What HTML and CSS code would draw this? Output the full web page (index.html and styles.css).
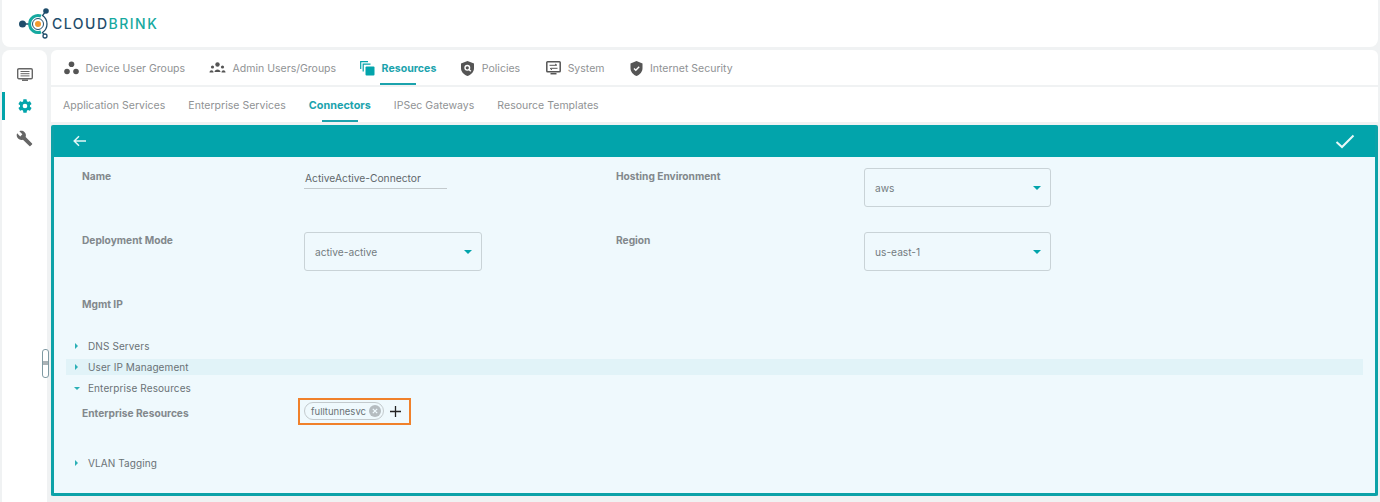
FILE: index.html
```html
<!DOCTYPE html>
<html lang="en">
<head>
    <meta charset="UTF-8">
    <meta name="viewport" content="width=device-width, initial-scale=1.0">
    <title>Cloudbrink</title>
    <link rel="stylesheet" href="styles.css">
</head>
<body>
    <header class="topbar">
        <svg class="logo-mark" width="35" height="38" viewBox="0 0 35 38">
            <path d="M5 19 H13" stroke="#1f4d6b" stroke-width="1.500"/>
            <circle cx="5.500" cy="19" r="3.500" fill="#1f4d6b"/>
            <path d="M24 11 A8.500 8.500 0 1 0 24 27" fill="none" stroke="#16a9a0" stroke-width="3"/>
            <path d="M29 6 L25.500 10.500 A10.300 10.300 0 0 1 25.500 27.500 L28 31" fill="none" stroke="#1f4d6b" stroke-width="1.300"/>
            <circle cx="21" cy="19" r="5.500" fill="#fff" stroke="#1f4d6b" stroke-width="1"/>
            <circle cx="21" cy="19" r="3" fill="#f29a2e"/>
            <circle cx="29" cy="6" r="2.800" fill="#1f4d6b"/>
            <circle cx="28" cy="31" r="2" fill="#fff" stroke="#1f4d6b" stroke-width="1.300"/>
        </svg>
        <span class="logo-text">CLOUD<span class="logo-accent">BRINK</span></span>
    </header>

    <div class="layout">
        <nav class="sidebar">
            <a class="side-item">
                <svg width="16" height="13" viewBox="0 0 16 13"><rect x=".7" y=".7" width="14.600" height="10" rx="1.200" fill="none" stroke="#666" stroke-width="1.400"/><path d="M3.500 3.500 H12.500 M3.500 5.700 H12.500 M3.500 7.900 H12.500" stroke="#666" stroke-width="1"/><path d="M5 12.200 H11" stroke="#666" stroke-width="1.500"/></svg>
            </a>
            <a class="side-item active">
                <svg width="16" height="16" viewBox="0 0 24 24"><path fill="#02a4ab" d="M19.400 13c.04-.33.06-.66.06-1s-.02-.67-.06-1l2.100-1.650c.2-.15.25-.42.12-.64l-2-3.460c-.12-.22-.39-.3-.61-.22l-2.490 1c-.52-.4-1.080-.73-1.690-.98l-.38-2.650A.49.49 0 0 0 14 2h-4c-.25 0-.46.18-.49.42l-.38 2.650c-.61.25-1.170.59-1.690.98l-2.490-1c-.23-.09-.49 0-.61.22l-2 3.460c-.13.22-.07.49.12.64L4.570 11c-.04.33-.07.67-.07 1s.03.67.07 1l-2.110 1.650c-.19.15-.24.42-.12.64l2 3.460c.12.22.39.3.61.22l2.490-1c.52.4 1.080.73 1.690.98l.38 2.650c.03.24.24.42.49.42h4c.25 0 .46-.18.49-.42l.38-2.650c.61-.25 1.170-.59 1.690-.98l2.490 1c.23.09.49 0 .61-.22l2-3.460c.12-.22.07-.49-.12-.64zM12 15.500a3.500 3.500 0 1 1 0-7 3.500 3.500 0 0 1 0 7z"/></svg>
            </a>
            <a class="side-item">
                <svg width="17" height="17" viewBox="0 0 24 24"><path fill="#666" d="M22.700 19l-9.100-9.100c.9-2.300.4-5-1.500-6.900-2-2-5-2.400-7.400-1.300L9 6 6 9 1.600 4.700C.4 7.100.9 10.100 2.900 12.100c1.900 1.900 4.600 2.400 6.900 1.500l9.100 9.100c.4.400 1 .4 1.400 0l2.300-2.300c.5-.4.5-1.100.1-1.400z"/></svg>
            </a>
        </nav>
        <div class="handle"></div>

        <main class="content">
            <div class="tabs main-tabs">
                <a class="tab">
                    <svg width="15" height="14" viewBox="0 0 15 14"><circle cx="7.500" cy="3.300" r="2.800" fill="#555"/><circle cx="3" cy="10.500" r="2.800" fill="#555"/><circle cx="12" cy="10.500" r="2.800" fill="#555"/></svg>
                    Device User Groups
                </a>
                <a class="tab">
                    <svg width="17" height="12" viewBox="0 0 17 12"><g fill="#555"><circle cx="8.500" cy="2.500" r="2.200"/><path d="M5.500 10 C5.500 6.500 11.500 6.500 11.500 10 Z"/><circle cx="3.500" cy="5" r="1.600"/><path d="M.5 10.500 C.5 7.500 4.500 7.500 4.500 10.500 Z"/><circle cx="13.500" cy="5" r="1.600"/><path d="M12.500 10.500 C12.500 7.500 16.500 7.500 16.500 10.500 Z"/></g></svg>
                    Admin Users/Groups
                </a>
                <a class="tab active">
                    <svg width="15" height="15" viewBox="0 0 15 15"><path d="M.7 8 V.7 H8 M3.200 10.500 V3.200 H10.500" fill="none" stroke="#02a4ab" stroke-width="1.200"/><rect x="5.500" y="5.500" width="9" height="9" rx="1" fill="#02a4ab"/></svg>
                    Resources
                </a>
                <a class="tab">
                    <svg width="15" height="15" viewBox="0 0 14 15"><path fill="#555" d="M7 0 L13.500 2.400 V7 C13.500 10.800 10.800 13.600 7 15 C3.200 13.600 .5 10.800 .5 7 V2.400 Z"/><circle cx="6.800" cy="6.800" r="2.300" fill="none" stroke="#fff" stroke-width="1.400"/><path d="M8.500 8.500 L10.300 10.300" stroke="#fff" stroke-width="1.400"/></svg>
                    Policies
                </a>
                <a class="tab tab-system">
                    <svg width="15" height="14" viewBox="0 0 15 14"><rect x=".8" y=".8" width="13.400" height="10" rx=".8" fill="none" stroke="#555" stroke-width="1.500"/><path d="M3.500 4.300 H10.500 M9 3 L11 4.300 M11.500 7.300 H4.500 M6 8.800 L4 7.300" stroke="#555" stroke-width="1" fill="none"/><path d="M4.500 12.700 H10.500" stroke="#555" stroke-width="1.500"/></svg>
                    System
                </a>
                <a class="tab">
                    <svg width="15" height="15" viewBox="0 0 14 15"><path fill="#555" d="M7 0 L13 2.400 V7 C13 10.800 10.500 13.600 7 15 C3.500 13.600 1 10.800 1 7 V2.400 Z"/><path d="M4.500 7.500 L6.300 9.300 L9.700 5.700" fill="none" stroke="#fff" stroke-width="1.400"/></svg>
                    Internet Security
                </a>
            </div>

            <div class="tabs sub-tabs">
                <a class="tab">Application Services</a>
                <a class="tab">Enterprise Services</a>
                <a class="tab active">Connectors</a>
                <a class="tab">IPSec Gateways</a>
                <a class="tab">Resource Templates</a>
            </div>

            <section class="panel">
                <div class="panel-head">
                    <svg width="14" height="12" viewBox="0 0 14 12"><path d="M13 6 H1.500 M6 1.200 L1.200 6 L6 10.800" fill="none" stroke="#e4f7f8" stroke-width="1.500"/></svg>
                    <svg width="20" height="15" viewBox="0 0 20 15"><path d="M1.500 8 L7 13 L18.500 1.500" fill="none" stroke="#e8f8f8" stroke-width="2"/></svg>
                </div>
                <div class="panel-body">
                    <div class="form-grid">
                        <label class="field-label">Name</label>
                        <div class="text-value">ActiveActive-Connector</div>
                        <label class="field-label">Hosting Environment</label>
                        <div class="select wide"><span>aws</span><i class="caret"></i></div>

                        <label class="field-label">Deployment Mode</label>
                        <div class="select"><span>active-active</span><i class="caret"></i></div>
                        <label class="field-label">Region</label>
                        <div class="select wide"><span>us-east-1</span><i class="caret"></i></div>

                        <label class="field-label">Mgmt IP</label>
                    </div>

                    <div class="section-row"><i class="arrow"></i>DNS Servers</div>
                    <div class="section-row hover"><i class="arrow"></i>User IP Management</div>
                    <div class="section-row"><i class="arrow open"></i>Enterprise Resources</div>
                    <div class="resource-row">
                        <label class="field-label">Enterprise Resources</label>
                        <div class="highlight">
                            <span class="chip">fulltunnesvc<i class="chip-x">
                                <svg width="12" height="12" viewBox="0 0 12 12"><circle cx="6" cy="6" r="6" fill="#b5bcc0"/><path d="M3.800 3.800 L8.200 8.200 M8.200 3.800 L3.800 8.200" stroke="#eff9fd" stroke-width="1.200"/></svg>
                            </i></span>
                            <svg class="plus" width="11" height="11" viewBox="0 0 11 11"><path d="M5.500 0 V11 M0 5.500 H11" stroke="#222" stroke-width="1.300"/></svg>
                        </div>
                    </div>
                    <div class="section-row"><i class="arrow"></i>VLAN Tagging</div>
                </div>
            </section>
        </main>
    </div>
</body>
</html>
```

FILE: styles.css
```css
* {
    box-sizing: border-box;
}
html, body {
    height: 100%;
}
body {
    margin: 0;
    overflow: hidden;
    background-color: #f0f2f3;
    font-family: Inter, "Liberation Sans", sans-serif;
    font-size: 10.500px;
    color: #6f7679;
}

/* top bar */
.topbar {
    display: flex;
    align-items: center;
    height: 47px;
    margin: 0 2px;
    padding-left: 15px;
    background-color: #fff;
    border-radius: 0 0 8px 8px;
}
.logo-text {
    font-size: 14px;
    letter-spacing: 1.500px;
    font-weight: 500;
    color: #1f4d6b;
}
.logo-accent {
    color: #16a9a0;
}

.layout {
    display: flex;
    gap: 4px;
    height: 452px;
    margin: 3px 2px 0;
}

/* left icons */
.sidebar {
    width: 45px;
    flex-shrink: 0;
    padding-top: 8px;
    background-color: #fff;
    border-radius: 8px 8px 0 0;
}
.side-item {
    display: flex;
    align-items: center;
    justify-content: center;
    height: 32px;
}
.side-item.active {
    height: 28px;
    margin: 2px 0;
    border-left: 3px solid #02a4ab;
    padding-right: 3px;
}
.handle {
    position: absolute;
    left: 42px;
    top: 349px;
    width: 7px;
    height: 29px;
    background: linear-gradient(#fff 11px, #aab2b6 11px, #aab2b6 15px, #fff 15px);
    border: 1px solid #7f9aa3;
    border-radius: 3px;
}

.content {
    flex: 1;
    min-width: 0;
}

/* tabs */
.tabs {
    display: flex;
    align-items: center;
    gap: 23px;
    height: 35px;
    padding-top: 1px;
    background-color: #fff;
}
.main-tabs {
    gap: 24px;
    padding-left: 13px;
    margin-bottom: 2px;
    border-radius: 6px 6px 0 0;
}
.sub-tabs {
    padding-left: 12px;
    letter-spacing: 0.03px;
}
.tab {
    position: relative;
    display: flex;
    align-items: center;
    gap: 6.500px;
    height: 100%;
    color: #8f9294;
}
.main-tabs .tab {
    letter-spacing: 0.005px;
}
.tab-system {
    margin-left: 2px;
}
.tab.active {
    font-size: 10.600px;
    font-weight: 700;
    color: #1ba3ad;
}
.sub-tabs .tab.active {
    font-size: 10.800px;
}
.tab.active::after {
    content: "";
    position: absolute;
    bottom: 0;
    left: 50%;
    width: 36px;
    height: 2px;
    margin-left: -18px;
    background-color: #1ba3ad;
}

/* panel */
.panel {
    height: 371px;
    margin-top: 3px;
    border: 3px solid #0da2a8;
    border-top: 0;
    border-radius: 2px;
    background-color: #eff9fd;
}
.panel-head {
    display: flex;
    align-items: center;
    justify-content: space-between;
    height: 32px;
    padding: 0 20px 0 19px;
    background-color: #02a4ab;
}
.panel-body {
    padding: 11px 12px 0;
}
.form-grid {
    display: grid;
    grid-template-columns: 222px 312px 248px 187px;
    grid-auto-rows: 39px;
    row-gap: 25px;
    padding-left: 16px;
}
.field-label {
    padding-top: 1px;
    line-height: 14px;
    font-weight: 700;
    font-size: 10.200px;
    color: #82888c;
}
.text-value {
    width: 143px;
    height: 21px;
    padding: 4px 0 0 1px;
    border-bottom: 1px solid #c3cacd;
    font-size: 10.250px;
    line-height: 13px;
    color: #5f676b;
}
.select {
    display: flex;
    align-items: center;
    justify-content: space-between;
    width: 178px;
    padding: 0 9px 0 10px;
    border: 1px solid #c9d3d7;
    border-radius: 3px;
    font-size: 10.200px;
    color: #737b7f;
}
.select.wide {
    width: 187px;
}
.caret {
    width: 0;
    height: 0;
    border-left: 4px solid transparent;
    border-right: 4px solid transparent;
    border-top: 4px solid #02a4ab;
}

/* collapsible rows */
.section-row {
    display: flex;
    align-items: center;
    height: 16px;
    margin-bottom: 5px;
    padding-left: 9px;
    font-size: 10px;
    letter-spacing: 0.1px;
    color: #6a7276;
}
.form-grid + .section-row {
    margin-top: 3px;
}
.section-row.hover {
    background-color: #e1f3f8;
}
.arrow {
    width: 0;
    height: 0;
    margin-right: 10px;
    border-top: 3px solid transparent;
    border-bottom: 3px solid transparent;
    border-left: 3.500px solid #2bb0b6;
}
.arrow.open {
    margin: 0 8px 0 -1px;
    border-left: 3px solid transparent;
    border-right: 3px solid transparent;
    border-top: 3.500px solid #2bb0b6;
    border-bottom: 0;
}
.resource-row {
    display: grid;
    grid-template-columns: 216px auto;
    justify-content: start;
    align-items: center;
    height: 28px;
    margin: -4px 0 30px;
    padding-left: 16px;
}
.resource-row .field-label {
    padding-top: 3px;
}
.highlight {
    display: flex;
    align-items: center;
    gap: 6px;
    width: 113px;
    height: 27px;
    padding-left: 4px;
    border: 2px solid #f0812b;
}
.chip {
    display: flex;
    align-items: center;
    gap: 3px;
    width: 80px;
    height: 18px;
    padding-left: 6px;
    border: 1px solid #c3cacd;
    border-radius: 9px;
    font-size: 9.500px;
    color: #6a7276;
}
.chip-x {
    display: flex;
}
```
